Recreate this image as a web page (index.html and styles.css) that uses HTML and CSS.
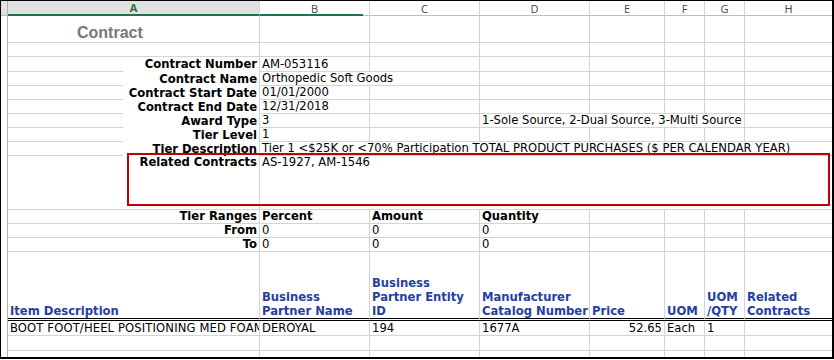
FILE: index.html
```html
<!DOCTYPE html>
<html lang="en">
<head>
    <meta charset="UTF-8">
    <title>Contract</title>
    <meta name="viewport" content="width=device-width, initial-scale=1.0">
    <link rel="stylesheet" href="styles.css">
</head>
<body>
    <div class="frame">
        <div class="sheet">
            <!-- column headers -->
            <div class="corner"></div>
            <div class="col sel span2">A</div>
            <div class="col col-b">B</div>
            <div class="col">C</div>
            <div class="col">D</div>
            <div class="col">E</div>
            <div class="col">F</div>
            <div class="col">G</div>
            <div class="col h">H</div>
            <div class="rowhead"></div>

            <!-- title -->
            <div class="span2 title">Contract</div>
            <div></div><div></div><div></div><div></div><div></div><div></div><div class="h"></div>

            <div class="span2"></div>
            <div></div><div></div><div></div><div></div><div></div><div></div><div class="h"></div>

            <!-- contract details -->
            <div class="a1"></div><div class="lbl">Contract Number</div>
            <div>AM-053116</div><div></div><div></div><div></div><div></div><div></div><div class="h"></div>

            <div class="a1"></div><div class="lbl">Contract Name</div>
            <div class="span2">Orthopedic Soft Goods</div><div></div><div></div><div></div><div></div><div class="h"></div>

            <div class="a1"></div><div class="lbl">Contract Start Date</div>
            <div>01/01/2000</div><div></div><div></div><div></div><div></div><div></div><div class="h"></div>

            <div class="a1"></div><div class="lbl">Contract End Date</div>
            <div>12/31/2018</div><div></div><div></div><div></div><div></div><div></div><div class="h"></div>

            <div class="a1"></div><div class="lbl">Award Type</div>
            <div>3</div><div></div><div class="span4">1-Sole Source, 2-Dual Source, 3-Multi Source</div><div class="h"></div>

            <div class="a1"></div><div class="lbl">Tier Level</div>
            <div>1</div><div></div><div></div><div></div><div></div><div></div><div class="h"></div>

            <div class="a1"></div><div class="lbl">Tier Description</div>
            <div class="span7 h">Tier 1 &lt;$25K or &lt;70% Participation TOTAL PRODUCT PURCHASES ($ PER CALENDAR YEAR)</div>

            <div class="a1"></div><div class="lbl ruled top">Related Contracts</div>
            <div class="span7 h top">AS-1927, AM-1546</div>

            <!-- tier ranges -->
            <div class="a1"></div><div class="lbl ruled">Tier Ranges</div>
            <div class="bold">Percent</div><div class="bold">Amount</div><div class="bold">Quantity</div><div></div><div></div><div></div><div class="h"></div>

            <div class="a1"></div><div class="lbl ruled">From</div>
            <div>0</div><div>0</div><div>0</div><div></div><div></div><div></div><div class="h"></div>

            <div class="a1"></div><div class="lbl ruled">To</div>
            <div>0</div><div>0</div><div>0</div><div></div><div></div><div></div><div class="h"></div>

            <!-- item table -->
            <div class="span2 th">Item Description</div>
            <div class="th">Business<br>Partner Name</div>
            <div class="th">Business<br>Partner Entity<br>ID</div>
            <div class="th">Manufacturer<br>Catalog Number</div>
            <div class="th">Price</div>
            <div class="th">UOM</div>
            <div class="th">UOM<br>/QTY</div>
            <div class="th h">Related<br>Contracts</div>

            <div class="span2 caps">BOOT FOOT/HEEL POSITIONING MED FOAM</div>
            <div>DEROYAL</div><div>194</div><div>1677A</div><div class="num">52.65</div><div>Each</div><div>1</div><div class="h"></div>

            <div class="span2"></div>
            <div></div><div></div><div></div><div></div><div></div><div></div><div class="h"></div>

            <div class="span2 last"></div>
            <div class="last"></div><div class="last"></div><div class="last"></div><div class="last"></div><div class="last"></div><div class="last"></div><div class="last h"></div>
        </div>
        <div class="highlight"></div>
    </div>
</body>
</html>
```

FILE: styles.css
```css
* {
    box-sizing: border-box;
}
body {
    margin: 0;
    background: #fff;
    font-family: "DejaVu Sans", Verdana, sans-serif;
    font-size: 11.6px;
    color: #000;
}
.frame {
    position: relative;
    width: 834px;
    height: 359px;
    border-top: 1px solid #000;
    border-left: 1px solid #000;
    border-right: 2px solid #000;
    border-bottom: 2px solid #000;
    overflow: hidden;
}
.sheet {
    display: grid;
    grid-template-columns: 7px 115px 137px 110px 110px 110px 75px 40px 40px 1fr;
    grid-template-rows: 15px 27px 14px 15px repeat(6, 14px) 54px repeat(3, 14px) 69px 15px 15px 1fr;
    height: 100%;
}
.sheet > div {
    display: flex;
    align-items: center;
    min-width: 0;
    padding: 0 2px;
    line-height: 13px;
    white-space: nowrap;
    overflow: hidden;
    border-right: 1px solid #d4d4d4;
    border-bottom: 1px solid #d4d4d4;
}

/* column headers */
.sheet > .corner {
    background: #e1e1e1;
    border-right: 1px solid #b0b0b0;
    border-bottom: 1px solid #bfbfbf;
}
.sheet > .col {
    justify-content: center;
    font-family: "Open Sans", "Noto Sans", sans-serif;
    font-size: 11px;
    color: #444;
    border-bottom: 1px solid #bfbfbf;
}
.sheet > .sel {
    background: #e1e1e1;
    color: #217346;
    font-weight: 700;
    border-bottom: 2px solid #217346;
}
.sheet > .col-b {
    border-bottom: none;
    background:
        linear-gradient(#217346, #217346) left bottom / 103px 2px no-repeat,
        linear-gradient(#bfbfbf, #bfbfbf) left bottom / 100% 1px no-repeat;
}
.sheet > .rowhead {
    grid-column: 1;
    grid-row: 2 / -1;
    border-right: 1px solid #b0b0b0;
    border-bottom: none;
}

.span2 { grid-column: span 2; }
.span4 { grid-column: span 4; }
.span7 { grid-column: span 7; }

.sheet > .h { border-right: none; }
.sheet > .a1 { border-right: none; }
.sheet > .last { border-bottom: none; }
.sheet > .top { align-items: flex-start; }

.sheet > .title {
    align-items: flex-end;
    padding-left: 69px;
    font-family: "Liberation Sans", Arial, sans-serif;
    font-size: 16px;
    font-weight: 700;
    line-height: 18px;
    color: #777;
}
.sheet > .lbl {
    justify-content: flex-end;
    font-weight: 700;
    border-bottom: none;
}
.sheet > .lbl.ruled {
    border-bottom: 1px solid #d4d4d4;
}
.bold {
    font-weight: 700;
}
.caps {
    letter-spacing: 0.12px;
}
.sheet > .num {
    justify-content: flex-end;
}
.sheet > .th {
    align-items: flex-end;
    font-weight: 700;
    line-height: 14px;
    color: #2540a0;
    border-bottom: 3px double #000;
}

.highlight {
    position: absolute;
    left: 126px;
    top: 152px;
    width: 703px;
    height: 53px;
    border: 2px solid #c00000;
}
```
